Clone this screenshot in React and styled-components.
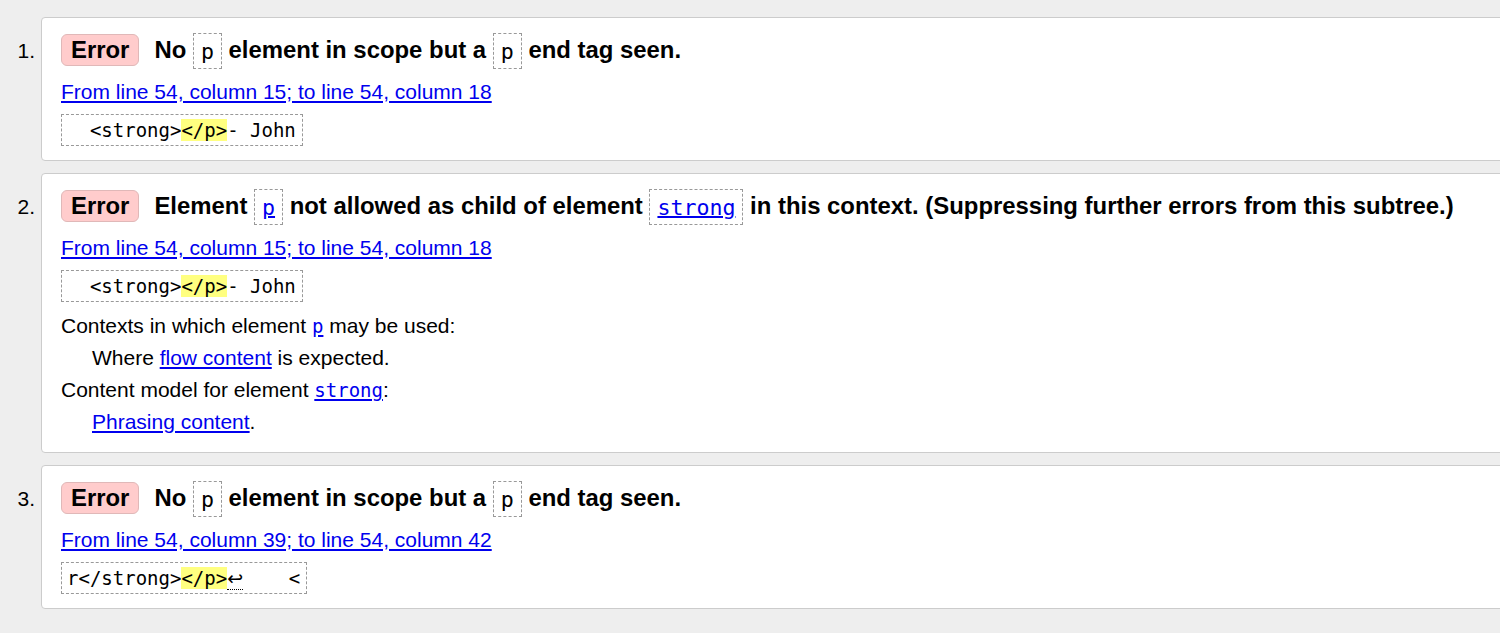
import React from "react";
import styled, { createGlobalStyle } from "styled-components";

const GlobalStyle = createGlobalStyle`
  html, body {
    margin: 0;
    padding: 0;
    background: #eeeeee;
    overflow: hidden;
  }
  body {
    font-family: "Liberation Sans", Arial, sans-serif;
    color: #000;
  }
`;

const Page = styled.div`
  padding-top: 17px;
  overflow: hidden;
`;

const List = styled.ol`
  list-style: none;
  margin: 0 -40px 0 0;
  padding: 0;
  display: flex;
  flex-direction: column;
  gap: 12px;
`;

const Item = styled.li`
  display: flex;
  align-items: baseline;
`;

const Marker = styled.span`
  flex: none;
  width: 41px;
  box-sizing: border-box;
  padding-right: 6px;
  text-align: right;
  font-size: 21px;
`;

const Card = styled.div`
  flex: 1;
  min-width: 0;
  background: #fff;
  border: 1px solid #cccccc;
  border-radius: 4px;
  padding: 12px 0 14px 19px;
`;

const Heading = styled.p`
  margin: 0;
  font-size: 23.9px;
  font-weight: bold;
  line-height: 40px;
  white-space: nowrap;
`;

const Badge = styled.strong`
  display: inline-block;
  background: #ffcccc;
  border: 1px solid #e0b8b8;
  border-radius: 6px;
  padding: 1px 9px;
  line-height: normal;
  margin-right: 15px;
`;

const HCode = styled.code`
  font-family: "DejaVu Sans Mono", "Liberation Mono", monospace;
  font-size: 21.6px;
  font-weight: normal;
  border: 1px dashed #999;
  padding: 4.5px 7px;
`;

const Link = styled.a`
  color: #0000ee;
  text-decoration: underline;
`;

const Location = styled.p`
  margin: 5px 0 0;
  font-size: 21px;
  line-height: 32px;
`;

const Extract = styled.p`
  margin: 6px 0 0;
  width: fit-content;
  border: 1px dashed #999;
  padding: 4px 6px 4px 5px;
  font-family: "DejaVu Sans Mono", "Liberation Mono", monospace;
  font-size: 19px;
  line-height: normal;
  white-space: pre;
`;

const Mark = styled.mark`
  background: #ffff80;
  color: inherit;
`;

const LineFeed = styled.span`
  font-family: "DejaVu Sans", sans-serif;
  border-bottom: 1px dotted #000;
`;

const Details = styled.dl`
  margin: 8px 0 0;
  font-size: 21px;
  line-height: 32px;
`;

const Term = styled.dt`
  margin: 0;
`;

const Desc = styled.dd`
  margin: 0 0 0 31px;
`;

const Mono = styled.code`
  font-family: "DejaVu Sans Mono", "Liberation Mono", monospace;
  font-size: 19px;
`;

export default function App() {
  return (
    <>
      <GlobalStyle />
      <Page>
        <List>
          <Item>
            <Marker>1.</Marker>
            <Card>
              <Heading>
                <Badge>Error</Badge>
                No <HCode>p</HCode> element in scope but a <HCode>p</HCode> end tag seen.
              </Heading>
              <Location>
                <Link href="#">From line 54, column 15; to line 54, column 18</Link>
              </Location>
              <Extract>
                {"  <strong>"}
                <Mark>{"</p>"}</Mark>
                {"- John"}
              </Extract>
            </Card>
          </Item>
          <Item>
            <Marker>2.</Marker>
            <Card>
              <Heading>
                <Badge>Error</Badge>
                Element{" "}
                <HCode>
                  <Link href="#">p</Link>
                </HCode>{" "}
                not allowed as child of element{" "}
                <HCode>
                  <Link href="#">strong</Link>
                </HCode>{" "}
                in this context. (Suppressing further errors from this subtree.)
              </Heading>
              <Location>
                <Link href="#">From line 54, column 15; to line 54, column 18</Link>
              </Location>
              <Extract>
                {"  <strong>"}
                <Mark>{"</p>"}</Mark>
                {"- John"}
              </Extract>
              <Details>
                <Term>
                  Contexts in which element{" "}
                  <Link href="#">
                    <Mono>p</Mono>
                  </Link>{" "}
                  may be used:
                </Term>
                <Desc>
                  Where <Link href="#">flow content</Link> is expected.
                </Desc>
                <Term>
                  Content model for element{" "}
                  <Link href="#">
                    <Mono>strong</Mono>
                  </Link>
                  :
                </Term>
                <Desc>
                  <Link href="#">Phrasing content</Link>.
                </Desc>
              </Details>
            </Card>
          </Item>
          <Item>
            <Marker>3.</Marker>
            <Card>
              <Heading>
                <Badge>Error</Badge>
                No <HCode>p</HCode> element in scope but a <HCode>p</HCode> end tag seen.
              </Heading>
              <Location>
                <Link href="#">From line 54, column 39; to line 54, column 42</Link>
              </Location>
              <Extract>
                {"r</strong>"}
                <Mark>{"</p>"}</Mark>
                <LineFeed>{"↩"}</LineFeed>
                {"    <"}
              </Extract>
            </Card>
          </Item>
        </List>
      </Page>
    </>
  );
}
